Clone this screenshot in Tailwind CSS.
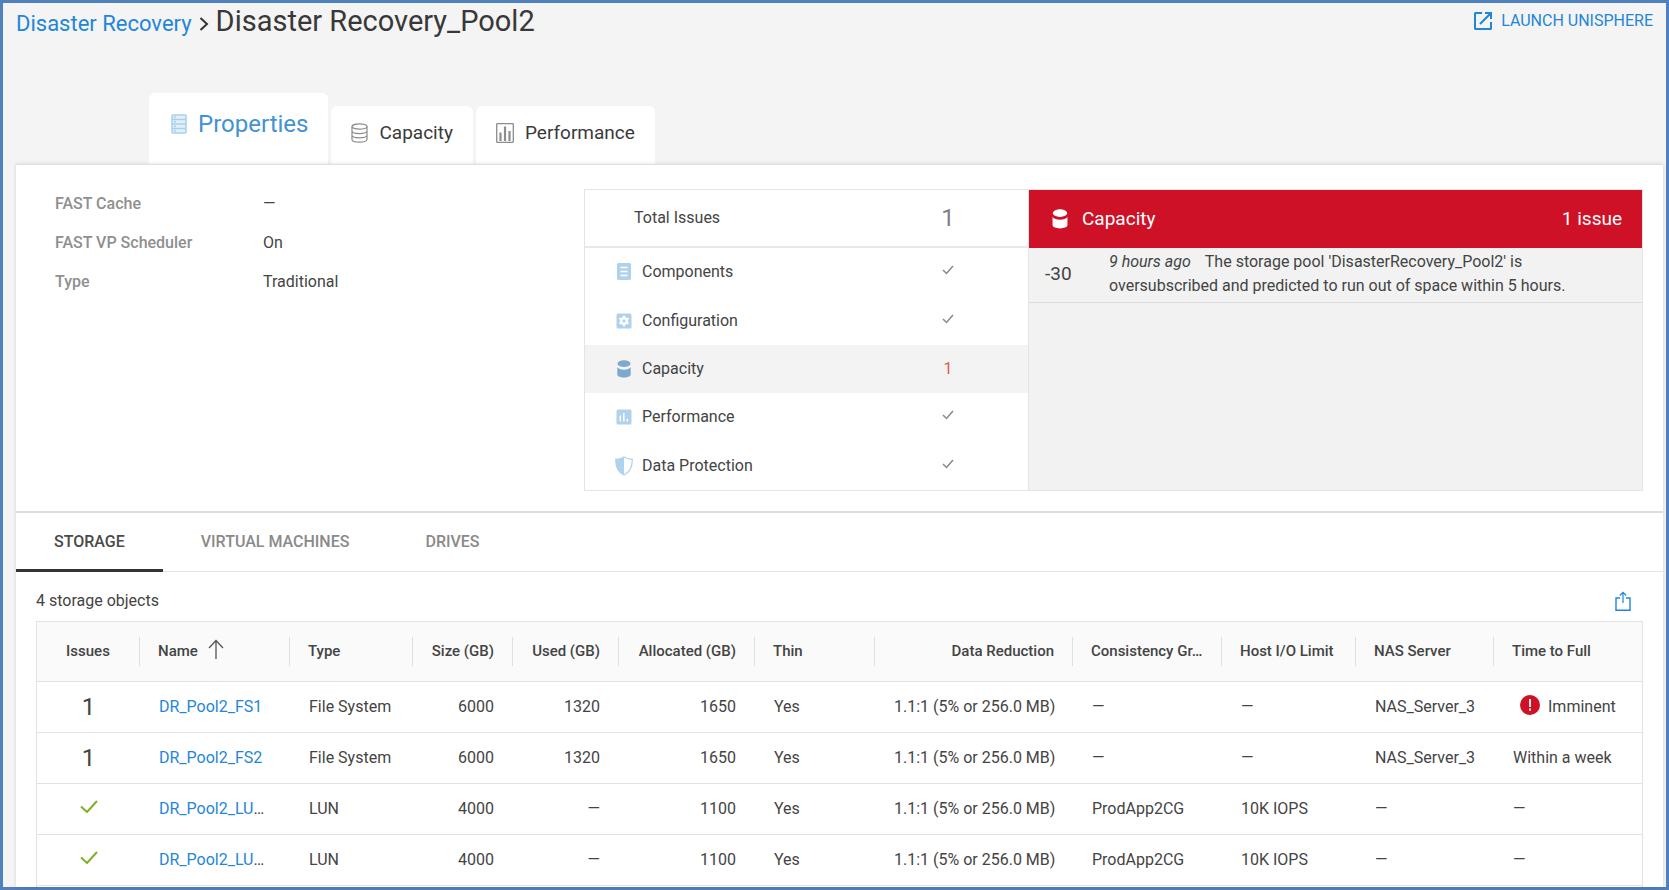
<!DOCTYPE html>
<html lang="en">
<head>
<meta charset="utf-8">
<title>Disaster Recovery_Pool2</title>
<script src="https://cdn.jsdelivr.net/npm/@tailwindcss/browser@4"></script>
</head>
<body class="bg-[#f4f4f4] font-[Roboto,sans-serif] text-[16px] text-[#444]">
<svg class="hidden" aria-hidden="true">
  <symbol id="tick" viewBox="0 0 12 10"><path d="M1 5l3.500 3.500L11 1" fill="none" stroke="currentColor" stroke-width="1.500"/></symbol>
  <symbol id="drum" viewBox="0 0 14 18"><ellipse cx="7" cy="3.700" rx="6.500" ry="3.400" fill="currentColor"/><path d="M.3 7.200C2.500 10.500 11.500 10.500 13.700 7.200V14.500c0 4-13.400 4-13.400 0z" fill="currentColor"/></symbol>
</svg>
<div class="flex min-h-screen flex-col border-3 border-[#4f81bd]">
  <header class="flex items-start justify-between pl-[13px] pr-[13px]">
    <nav class="flex items-baseline" aria-label="Breadcrumb">
      <a href="#" class="text-[22px] leading-9 text-[#1f86d9]">Disaster Recovery</a>
      <svg class="mx-[7px] h-[14px] w-[10px]" viewBox="0 0 10 14"><path d="M1.500 1L8 7l-6.500 6" fill="none" stroke="#333" stroke-width="2"/></svg>
      <h1 class="text-[29px] leading-9 text-[#383838]">Disaster Recovery_Pool2</h1>
    </nav>
    <a href="#" class="flex items-center gap-2 pt-2 leading-5 text-[#1f86d9]">
      <svg class="size-5" viewBox="0 0 20 20" fill="none" stroke="currentColor" stroke-width="2"><path d="M9 2H2.500L2 2.500v15l.5.5h15l.5-.5V11M12 2h6v6M18 2L7 13"/></svg>
      LAUNCH UNISPHERE
    </a>
  </header>

  <nav class="mt-[51px] flex items-end gap-[3px] pl-[146px] text-[19px]" aria-label="Views">
    <button class="flex h-[71px] items-center rounded-t-md bg-white pb-[10px] pl-[22px] pr-5 text-2xl text-[#4392d3]">
      <svg class="mr-[11px] h-5 w-4" viewBox="0 0 16 20" fill="#e3f0fa" stroke="#a9cfec" stroke-width="1.500"><rect x="1" y="1" width="14" height="18" rx="1"/><path d="M1 5.500h14M1 10h14M1 14.500h14M3 3.300h2M3 7.700h2M3 12.200h2M3 16.700h2"/></svg>
      Properties
    </button>
    <button class="flex h-[58px] items-center rounded-t-md bg-white pb-1 pl-5 pr-5 text-[#3a3a3a]">
      <svg class="mr-[11px] h-5 w-[17px]" viewBox="0 0 17 20" fill="none" stroke="#8c8c8c" stroke-width="1.200"><ellipse cx="8.500" cy="3.500" rx="7.500" ry="2.700"/><path d="M1 3.500v13c0 3.600 15 3.600 15 0v-13M1 8c0 3.400 15 3.400 15 0M1 12.300c0 3.400 15 3.400 15 0"/></svg>
      Capacity
    </button>
    <button class="flex h-[58px] items-center rounded-t-md bg-white pb-1 pl-5 pr-5 text-[#3a3a3a]">
      <svg class="mr-[11px] h-5 w-[18px]" viewBox="0 0 18 20" fill="none" stroke="#8c8c8c" stroke-width="1.300"><rect x=".7" y=".7" width="16.600" height="18.600" rx=".5"/><path d="M4.500 9.500V18M9 3.500V18M13.500 8V18" stroke-width="2.200"/></svg>
      Performance
    </button>
  </nav>

  <main class="ml-[13px] mr-[3px] flex flex-1 flex-col border-t border-[#e2e2e2] bg-white shadow-[0_0_4px_#0002]">
    <section class="flex items-start pb-5 pl-[39px] pr-5 pt-6">
      <dl class="grid flex-1 grid-cols-[208px_1fr] leading-[39px] -mt-[5px]">
        <dt class="font-medium text-[#8f8f8f]">FAST Cache</dt><dd>—</dd>
        <dt class="font-medium text-[#8f8f8f]">FAST VP Scheduler</dt><dd>On</dd>
        <dt class="font-medium text-[#8f8f8f]">Type</dt><dd>Traditional</dd>
      </dl>
      <div class="flex h-[302px] w-[1059px] border border-[#e4e4e4]">
        <div class="flex w-[443px] flex-col">
          <div class="flex h-[58px] items-center border-b-2 border-[#e8e8e8] pl-[49px]">
            <span class="flex-1">Total Issues</span><span class="mr-[60px] w-10 text-center text-2xl text-[#808080]">1</span>
          </div>
          <button class="flex flex-1 items-center pl-[31px] text-left">
            <svg class="mr-[10px] h-[18px] w-4" viewBox="0 0 16 18"><rect x="1" width="14" height="17" rx="1.500" fill="#b0d2ec"/><path d="M4.500 4.500h7M4.500 8.500h7M4.500 12.500h7" stroke="#fff" stroke-width="1.500"/></svg>
            <span class="flex-1">Components</span><span class="mr-[60px] flex w-10 justify-center pb-1"><svg class="h-[10px] w-3 text-[#888]"><use href="#tick"/></svg></span>
          </button>
          <button class="flex flex-1 items-center pl-[31px] text-left">
            <svg class="mr-[10px] h-[18px] w-4" viewBox="0 0 16 18"><rect x=".5" y="1.500" width="15" height="15" rx="1.500" fill="#b0d2ec"/><circle cx="8" cy="9" r="2.800" fill="none" stroke="#fff" stroke-width="2.400"/><path d="M8 3.800v10.400M3.500 6.400l9 5.200M12.500 6.400l-9 5.200" stroke="#fff" stroke-width="2.200"/><circle cx="8" cy="9" r="1.600" fill="#b0d2ec"/></svg>
            <span class="flex-1">Configuration</span><span class="mr-[60px] flex w-10 justify-center pb-1"><svg class="h-[10px] w-3 text-[#888]"><use href="#tick"/></svg></span>
          </button>
          <button class="flex flex-1 items-center bg-[#f3f3f3] pl-[31px] text-left">
            <svg class="mr-[10px] h-[18px] w-4 text-[#7fa8cd]"><use href="#drum"/></svg>
            <span class="flex-1">Capacity</span><span class="mr-[60px] w-10 text-center text-[#dd5a4c]">1</span>
          </button>
          <button class="flex flex-1 items-center pl-[31px] text-left">
            <svg class="mr-[10px] h-[18px] w-4" viewBox="0 0 16 18"><rect x=".5" y="1.500" width="15" height="15" rx="1.500" fill="#b0d2ec"/><path d="M4.300 7.500v6M7.800 5v8.500M11.300 11v2.500" stroke="#fff" stroke-width="1.500"/></svg>
            <span class="flex-1">Performance</span><span class="mr-[60px] flex w-10 justify-center pb-1"><svg class="h-[10px] w-3 text-[#888]"><use href="#tick"/></svg></span>
          </button>
          <button class="flex flex-1 items-center pl-[30px] text-left">
            <svg class="mr-[9px] h-5 w-[18px]" viewBox="0 0 18 20"><path d="M9 1c2.500 1.600 5 2.300 8.200 2.300C17.500 10 15.500 16 9 19 2.500 16 .5 10 .8 3.300 4 3.300 6.500 2.600 9 1z" fill="#fff" stroke="#b0d2ec" stroke-width="1.200"/><path d="M9 1v18C2.500 16 .5 10 .8 3.300 4 3.300 6.500 2.600 9 1z" fill="#b0d2ec"/></svg>
            <span class="flex-1">Data Protection</span><span class="mr-[60px] flex w-10 justify-center pb-1"><svg class="h-[10px] w-3 text-[#888]"><use href="#tick"/></svg></span>
          </button>
        </div>
        <div class="flex-1 border-l border-[#e4e4e4] bg-[#f2f2f2]">
          <h2 class="flex h-[58px] items-center bg-[#ce1126] pl-[22px] pr-5 text-[19px] text-white">
            <svg class="mr-[13px] h-5 w-[18px]"><use href="#drum"/></svg><span class="flex-1">Capacity</span><span>1 issue</span>
          </h2>
          <div class="flex items-center border-b border-[#dcdcdc] pb-1 pl-4 pt-[2px]">
            <span class="w-16 text-[19px]">-30</span>
            <p class="w-[480px] leading-6"><i class="mr-[14px]">9 hours ago</i>The storage pool 'DisasterRecovery_Pool2' is oversubscribed and predicted to run out of space within 5 hours.</p>
          </div>
        </div>
      </div>
    </section>

    <nav class="flex h-[61px] items-stretch border-b border-t-2 border-b-[#e4e4e4] border-t-[#dedede] font-medium text-[#8a8a8a]" aria-label="Objects">
      <button class="-mb-px border-b-3 border-[#333] px-[38px] pt-[2px] text-[#4a4a4a]">STORAGE</button>
      <button class="px-[38px]">VIRTUAL MACHINES</button>
      <button class="px-[38px]">DRIVES</button>
    </nav>

    <section class="flex flex-1 flex-col pl-5 pr-5">
      <div class="flex h-[49px] items-center justify-between pr-3 pt-[9px]">
        <p>4 storage objects</p>
        <button aria-label="Export"><svg class="h-5 w-4" viewBox="0 0 16 20" fill="none" stroke="#1f86d9" stroke-width="1.400"><path d="M5 7H1v12.300h14V7h-4"/><path d="M8 12V1.500M4.800 4.500L8 1.300l3.200 3.200" stroke-width="1.200"/></svg></button>
      </div>
      <div class="flex-1 border-x border-t border-[#e2e2e2]">
      <table class="w-full table-fixed border-collapse text-left">
        <colgroup><col class="w-[103px]"><col class="w-[150px]"><col class="w-[123px]"><col class="w-[100px]"><col class="w-[106px]"><col class="w-[136px]"><col class="w-[120px]"><col class="w-[198px]"><col class="w-[149px]"><col class="w-[134px]"><col class="w-[138px]"><col class="w-[148px]"></colgroup>
        <thead class="bg-[#fafafa] text-[15px]">
          <tr class="h-[59px] whitespace-nowrap border-b border-[#e2e2e2] [&>th]:p-0 [&>th]:font-medium [&_span]:block [&_span]:border-r [&_span]:border-[#e0e0e0] [&_span]:px-[18px] [&_span]:leading-[29px]">
            <th class="text-center"><span>Issues</span></th>
            <th><span class="flex! items-center">Name<svg class="mb-1 ml-[10px] h-5 w-4" viewBox="0 0 16 20" fill="none" stroke="#555" stroke-width="1.300"><path d="M8 20V1.500M1 9l7-7.500L15 9"/></svg></span></th>
            <th><span>Type</span></th>
            <th class="text-right"><span>Size (GB)</span></th>
            <th class="text-right"><span>Used (GB)</span></th>
            <th class="text-right"><span>Allocated (GB)</span></th>
            <th><span>Thin</span></th>
            <th class="text-right"><span>Data Reduction</span></th>
            <th><span>Consistency Gr…</span></th>
            <th><span>Host I/O Limit</span></th>
            <th><span>NAS Server</span></th>
            <th><span class="border-r-0!">Time to Full</span></th>
          </tr>
        </thead>
        <tbody class="[&>tr]:h-[51px] [&>tr]:border-b [&>tr]:border-[#e2e2e2] [&_td]:whitespace-nowrap [&_td]:px-[19px] [&_td]:py-0">
          <tr><td class="text-center text-2xl">1</td><td><a href="#" class="text-[#1f86d9]">DR_Pool2_FS1</a></td><td>File System</td><td class="text-right">6000</td><td class="text-right">1320</td><td class="text-right">1650</td><td>Yes</td><td class="text-right">1.1:1 (5% or 256.0 MB)</td><td>—</td><td>—</td><td>NAS_Server_3</td><td><div class="flex items-center gap-2 pl-[7px]"><svg class="mb-1 size-5" viewBox="0 0 20 20"><circle cx="10" cy="10" r="10" fill="#ce1126"/><path d="M10 4v8M10 13.500v2.200" stroke="#fff" stroke-width="1.800"/></svg>Imminent</div></td></tr>
          <tr><td class="text-center text-2xl">1</td><td><a href="#" class="text-[#1f86d9]">DR_Pool2_FS2</a></td><td>File System</td><td class="text-right">6000</td><td class="text-right">1320</td><td class="text-right">1650</td><td>Yes</td><td class="text-right">1.1:1 (5% or 256.0 MB)</td><td>—</td><td>—</td><td>NAS_Server_3</td><td>Within a week</td></tr>
          <tr><td><svg class="mx-auto mb-1 h-[13px] w-[18px] text-[#7fb02a]" viewBox="0 0 18 13"><path d="M1 6.500L7 12 17 1" fill="none" stroke="currentColor" stroke-width="2"/></svg></td><td><a href="#" class="text-[#1f86d9]">DR_Pool2_LU</a>…</td><td>LUN</td><td class="text-right">4000</td><td class="text-right">—</td><td class="text-right">1100</td><td>Yes</td><td class="text-right">1.1:1 (5% or 256.0 MB)</td><td>ProdApp2CG</td><td>10K IOPS</td><td>—</td><td>—</td></tr>
          <tr><td><svg class="mx-auto mb-1 h-[13px] w-[18px] text-[#7fb02a]" viewBox="0 0 18 13"><path d="M1 6.500L7 12 17 1" fill="none" stroke="currentColor" stroke-width="2"/></svg></td><td><a href="#" class="text-[#1f86d9]">DR_Pool2_LU</a>…</td><td>LUN</td><td class="text-right">4000</td><td class="text-right">—</td><td class="text-right">1100</td><td>Yes</td><td class="text-right">1.1:1 (5% or 256.0 MB)</td><td>ProdApp2CG</td><td>10K IOPS</td><td>—</td><td>—</td></tr>
        </tbody>
      </table>
      </div>
    </section>
  </main>
</div>
</body>
</html>
